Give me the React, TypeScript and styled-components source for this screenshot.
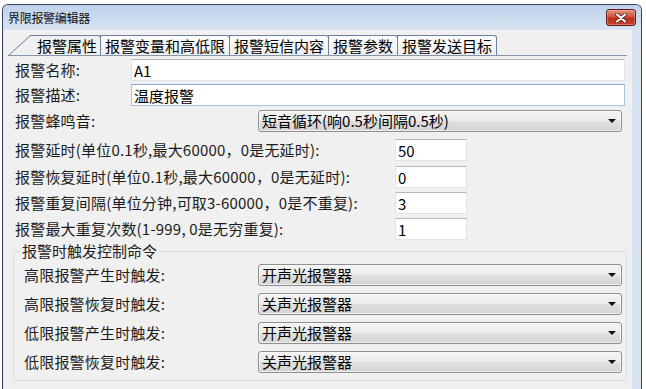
import React from "react";
import styled, { createGlobalStyle } from "styled-components";

const FONT = `"Noto Sans CJK SC", "Noto Sans", sans-serif`;

const GlobalStyle = createGlobalStyle`
  html, body {
    margin: 0;
    padding: 0;
    background: #ffffff;
    font-family: ${FONT};
  }
  * {
    box-sizing: border-box;
  }
`;

const Window = styled.div`
  margin: 4px 0 0 2px;
  width: 640px;
  height: 385px;
  border: 1px solid #34465e;
  border-bottom: none;
  border-radius: 6px 6px 0 0;
  background: #d8e4f2;
  display: flex;
  flex-direction: column;
  overflow: hidden;
`;

const TitleBar = styled.div`
  flex: none;
  height: 25px;
  display: flex;
  align-items: center;
  justify-content: space-between;
  padding: 0 5px 0 5px;
  background: linear-gradient(#bfd2e9, #d6e3f2);
`;

const Title = styled.span`
  font-size: 12px;
  line-height: 14px;
  color: #111;
  letter-spacing: -0.3px;
`;

const CloseButton = styled.div`
  width: 30px;
  height: 17px;
  border: 1px solid #5e1c14;
  border-radius: 3px;
  background: linear-gradient(#e39480 0%, #d2523b 45%, #b82d1a 55%, #c9452c 100%);
  box-shadow: inset 0 0 0 1px rgba(255, 210, 200, 0.35);
  display: flex;
  align-items: center;
  justify-content: center;
`;

const Body = styled.div`
  flex: 1;
  display: flex;
  padding: 0 10px 0 1px;
  min-height: 0;
`;

const Client = styled.div`
  flex: 1;
  background: #f0f0f0;
  padding-top: 5px;
  display: flex;
  flex-direction: column;
`;

const TabStrip = styled.div`
  display: flex;
  align-items: flex-end;
  height: 21px;
  margin: 0 5px 0 4px;
  border-bottom: 1px solid #8396ad;
`;

const Tab = styled.div<{ $active?: boolean }>`
  position: relative;
  height: 20px;
  font-size: 15px;
  line-height: 19px;
  color: #000;
  white-space: nowrap;
  border: 1px solid #6c819d;
  border-bottom: none;
  border-radius: 0 3px 0 0;
  margin-left: -1px;
  padding: 0 4px 0 4px;
  background: ${(p) =>
    p.$active ? "#f0f0f0" : "linear-gradient(#fdfdfd, #eeeeee)"};
  ${(p) =>
    p.$active &&
    `
    border-left: none;
    margin-left: 22px;
    padding: 0 3px 0 7px;
    &::before {
      content: "";
      position: absolute;
      left: -22px;
      top: -1px;
      width: 23px;
      height: 21px;
      background: linear-gradient(
        to bottom right,
        transparent calc(50% - 0.8px),
        #6c819d 50%,
        transparent calc(50% + 0.8px)
      );
    }
  `}
`;

const Form = styled.div`
  padding: 3px 5px 0 9px;
  display: flex;
  flex-direction: column;
`;

const Row = styled.div<{ $mt?: number }>`
  display: flex;
  align-items: center;
  height: 22px;
  padding-left: 2px;
  margin-top: ${(p) => p.$mt ?? 0}px;
`;

const Label = styled.span<{ $w: number }>`
  flex: none;
  width: ${(p) => p.$w}px;
  font-size: 15px;
  line-height: 22px;
  color: #1c1c1c;
  white-space: nowrap;
  letter-spacing: 0.2px;
`;

const TextBox = styled.input<{ $w: number; $focus?: boolean }>`
  flex: none;
  width: ${(p) => p.$w}px;
  height: 22px;
  margin: 0;
  padding: 0 2px;
  font-family: ${FONT};
  font-size: 15px;
  color: #000;
  background: #ffffff;
  outline: none;
  border: 1px solid ${(p) => (p.$focus ? "#a9c3dd" : "#e1e3e8")};
  border-top-color: ${(p) => (p.$focus ? "#8fb0d2" : "#b4b7bf")};
`;

const Combo = styled.div<{ $w: number }>`
  flex: none;
  position: relative;
  width: ${(p) => p.$w}px;
  height: 22px;
  padding: 0 18px 0 3px;
  font-size: 15px;
  line-height: 20px;
  color: #000;
  white-space: nowrap;
  border: 1px solid #8e8f8f;
  border-radius: 3px;
  background: linear-gradient(#f3f3f3 0%, #ececec 48%, #dfdfdf 52%, #d4d4d4 100%);
  box-shadow: inset 0 0 0 1px rgba(255, 255, 255, 0.6);
`;

const Arrow = styled.span`
  position: absolute;
  right: 5px;
  top: 8px;
  width: 0;
  height: 0;
  border-left: 4px solid transparent;
  border-right: 4px solid transparent;
  border-top: 4px solid #111;
`;

const Group = styled.fieldset`
  margin: 1px 0 0 0;
  width: 614px;
  min-width: 0;
  padding: 3px 4px 7px 10px;
  border: 1px solid #d5dfe5;
  border-radius: 3px;
  display: flex;
  flex-direction: column;
  gap: 7px;
`;

const Legend = styled.legend`
  font-size: 15px;
  line-height: 20px;
  padding: 0 2px;
  margin-left: -4px;
  color: #1c1c1c;
`;

const GroupRow = styled.div`
  display: flex;
  align-items: center;
  height: 22px;
`;

function Select({ w, value }: { w: number; value: string }) {
  return (
    <Combo $w={w}>
      {value}
      <Arrow />
    </Combo>
  );
}

const tabs = ["报警属性", "报警变量和高低限", "报警短信内容", "报警参数", "报警发送目标"];

const numberRows = [
  { label: "报警延时(单位0.1秒,最大60000，0是无延时):", value: "50", mt: 7 },
  { label: "报警恢复延时(单位0.1秒,最大60000，0是无延时):", value: "0", mt: 5 },
  { label: "报警重复间隔(单位分钟,可取3-60000，0是不重复):", value: "3", mt: 4 },
  { label: "报警最大重复次数(1-999, 0是无穷重复):", value: "1", mt: 4 },
];

const triggers = [
  { label: "高限报警产生时触发:", value: "开声光报警器" },
  { label: "高限报警恢复时触发:", value: "关声光报警器" },
  { label: "低限报警产生时触发:", value: "开声光报警器" },
  { label: "低限报警恢复时触发:", value: "关声光报警器" },
];

export default function App() {
  return (
    <>
      <GlobalStyle />
      <Window>
        <TitleBar>
          <Title>界限报警编辑器</Title>
          <CloseButton>
            <svg width="12" height="10" viewBox="0 0 12 10">
              <path d="M2 1.5 L10 8.5 M10 1.5 L2 8.5" stroke="#4a140d" strokeWidth="3.6" strokeLinecap="round" />
              <path d="M2 1.5 L10 8.5 M10 1.5 L2 8.5" stroke="#ffffff" strokeWidth="2.2" strokeLinecap="round" />
            </svg>
          </CloseButton>
        </TitleBar>
        <Body>
          <Client>
            <TabStrip>
              {tabs.map((t, i) => (
                <Tab key={t} $active={i === 0}>
                  {t}
                </Tab>
              ))}
            </TabStrip>
            <Form>
              <Row>
                <Label $w={116}>报警名称:</Label>
                <TextBox $w={494} readOnly defaultValue="A1" />
              </Row>
              <Row $mt={3}>
                <Label $w={116}>报警描述:</Label>
                <TextBox $w={494} $focus readOnly defaultValue="温度报警" />
              </Row>
              <Row $mt={4}>
                <Label $w={243}>报警蜂鸣音:</Label>
                <Select w={364} value="短音循环(响0.5秒间隔0.5秒)" />
              </Row>
              {numberRows.map((r) => (
                <Row key={r.label} $mt={r.mt}>
                  <Label $w={380}>{r.label}</Label>
                  <TextBox $w={72} readOnly defaultValue={r.value} />
                </Row>
              ))}
              <Group>
                <Legend>报警时触发控制命令</Legend>
                {triggers.map((r) => (
                  <GroupRow key={r.label}>
                    <Label $w={234}>{r.label}</Label>
                    <Select w={364} value={r.value} />
                  </GroupRow>
                ))}
              </Group>
            </Form>
          </Client>
        </Body>
      </Window>
    </>
  );
}
